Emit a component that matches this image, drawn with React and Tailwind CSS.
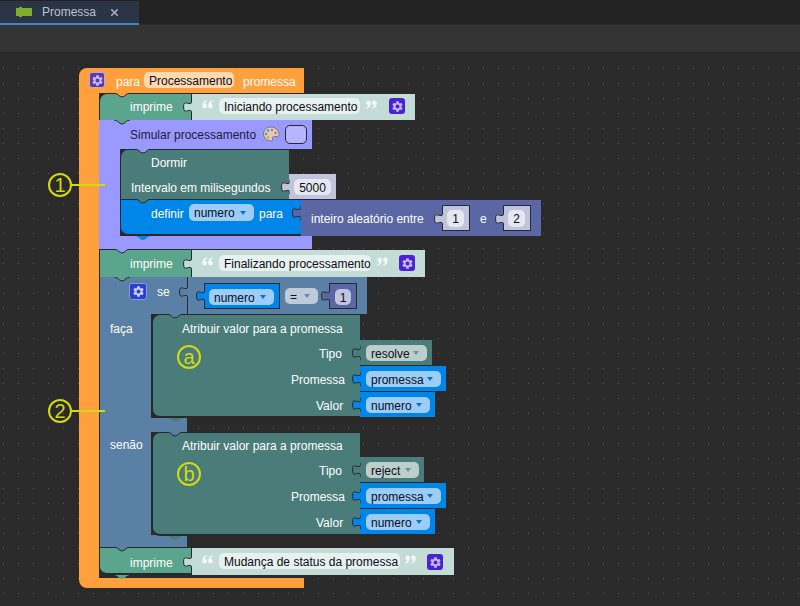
import { MdSettings } from 'react-icons/md';
import { X } from 'lucide-react';

const Box = ({ className = '', children }) => <div className={'absolute ' + className}>{children}</div>;

const Txt = ({ className = '', children }) => (
  <span className={'absolute mt-px whitespace-nowrap leading-4 text-white ' + className}>{children}</span>
);

const Field = ({ className = '', arrow, children }) => (
  <div className={'absolute flex items-center justify-between rounded-[5px] px-[5px] leading-4 text-[#0c0c20] whitespace-nowrap ' + className}>
    <span className="mt-px">{children}</span>
    {arrow && <span className={'mr-[3px] h-0 w-0 border-x-[3px] border-t-[4px] border-x-transparent ' + arrow}></span>}
  </div>
);

// input socket puzzle tab, sits on the left edge of a value block
const Tab = ({ className = '', fill }) => (
  <svg className={'absolute ' + className} width="9" height="16" viewBox="0 0 9 16">
    <path d="M9 0.5 V2 C9 7 3 3 1.5 4 C0 5 0.5 11 1.5 12 C3 13 9 9 9 14 V15.5" fill={fill} stroke="#27292b" strokeWidth="1" />
  </svg>
);

// next connection bump under a statement block
const Bump = ({ className = '', fill, line = true }) => (
  <svg className={'absolute ' + className} width="16" height="5" viewBox="0 0 16 5">
    <path d="M0 0 C4 0 5 4 8 4 C11 4 12 0 16 0 Z" fill={fill} />
    {line && <path d="M0 0 C4 0 5 4 8 4 C11 4 12 0 16 0" fill="none" stroke="#27292b" strokeWidth="1" />}
  </svg>
);

const Gear = ({ className = '', color = 'text-[#c9b6f5]' }) => (
  <div className={'absolute flex items-center justify-center rounded-[3px] ' + className}>
    <MdSettings className={'h-[13px] w-[13px] ' + color} />
  </div>
);

// quote marks of the text block, blockly draws these as images
const Quote = ({ className = '', close }) => (
  <svg className={'absolute ' + className + (close ? ' rotate-180' : '')} width="11" height="9" viewBox="0 0 11 9">
    <path d="M4.6 0.2 C2 1 0.2 3 0.2 6 A2.4 2.4 0 1 0 2.9 3.8 C3 2.8 3.8 2 5 1.5 Z" fill="#f2f8f6" />
    <path d="M10.4 0.2 C7.8 1 6 3 6 6 A2.4 2.4 0 1 0 8.7 3.8 C8.8 2.8 9.6 2 10.8 1.5 Z" fill="#f2f8f6" />
  </svg>
);

const Mark = ({ className = '', children }) => (
  <div className={'absolute flex h-[24px] w-[24px] items-center justify-center rounded-full border-2 border-[#d5d90f] text-[20px] leading-none text-[#d5d90f] ' + className}>
    {children}
  </div>
);

const Palette = () => (
  <svg className="absolute left-[263px] top-[126px]" width="17" height="16" viewBox="0 0 17 16">
    <path d="M8 1 C3 1 0.5 4.5 0.5 8 C0.5 12 4 15 8 15 C9.5 15 10 14 9.5 13 C9 11.5 10 10.5 11.5 10.5 H14 C15.5 10.5 16.5 9.5 16 7.5 C15 3.5 12 1 8 1 Z" fill="#d8cdbd" stroke="#6c6660" strokeWidth="0.8" />
    <circle cx="5" cy="4.5" r="1.2" fill="#4c8fd6" />
    <circle cx="3" cy="8" r="1.2" fill="#4fa84f" />
    <circle cx="5" cy="11.5" r="1.2" fill="#d9a21f" />
    <circle cx="9" cy="4" r="1.1" fill="#d64c4c" />
    <circle cx="12.5" cy="7" r="1.1" fill="#d64c4c" />
  </svg>
);

const ASSIGN = 'bg-[#4a7d7a]';

export default function App() {
  return (
    <div className="relative h-[606px] w-[800px] overflow-hidden bg-[#2a2a2a] [font-family:Liberation_Sans,sans-serif] text-[12px]">
      {/* tab strip */}
      <div className="absolute left-0 top-0 h-[24px] w-[800px] bg-[#232323]"></div>
      <div className="absolute left-0 top-[1px] flex h-[24px] w-[139px] items-center border-b-2 border-[#3f86c4] bg-[#2b3444]">
        <svg className="ml-[16px]" width="16" height="10" viewBox="0 0 16 10">
          <path d="M0 1 H3 V0 H6 V1 H16 V9 H6 V10 H3 V9 H0 Z" fill="#7fae2c" />
        </svg>
        <span className="ml-[10px] text-[#b9c3cf]">Promessa</span>
        <X className="ml-[13px] h-[11px] w-[11px] text-[#a9b0b8]" strokeWidth={3.5} />
      </div>
      <div className="absolute left-0 top-[25px] h-[28px] w-[800px] border-b border-[#262626] bg-[#333333]"></div>

      {/* workspace dots */}
      <div className="absolute left-0 top-[54px] h-[552px] w-[800px] bg-[radial-gradient(circle,#5a5a5a_0.6px,transparent_1px)] bg-[size:15px_15px] bg-[position:-4px_-8px]"></div>

      {/* para Processamento promessa */}
      <Box className="left-[79px] top-[68px] h-[25px] w-[225px] rounded-tl-lg bg-[#ffa03c]" />
      <Box className="left-[79px] top-[93px] h-[485px] w-[20px] bg-[#ffa03c]" />
      <Box className="left-[79px] top-[578px] h-[10px] w-[225px] rounded-bl-lg bg-[#ffa03c]" />
      <Gear className="left-[89px] top-[72px] h-[16px] w-[16px] border border-[#c9a3e0] bg-[#5a3ca8]" />
      <Txt className="left-[116px] top-[73px]">para</Txt>
      <Field className="left-[144px] top-[72px] h-[16px] w-[90px] bg-[#ffd9b0]">Processamento</Field>
      <Txt className="left-[243px] top-[73px]">promessa</Txt>

      {/* imprime 1 */}
      <Box className="left-[99px] top-[93px] h-[27px] w-[92px] rounded-tl-lg border-l border-t border-[#27292b] bg-[#5ba58c]" />
      <Box className="left-[191px] top-[93px] h-[27px] w-[224px] border-t border-[#27292b] bg-[#c3dcd6]" />
      <Box className="left-[191px] top-[93px] h-[27px] w-px bg-[#27292b]" />
      <Bump className="left-[114px] top-[93px]" fill="#ffa03c" />
      <Tab className="left-[183px] top-[99px]" fill="#c3dcd6" />
      <Txt className="left-[130px] top-[98px]">imprime</Txt>
      <Quote className="left-[202px] top-[100px]" />
      <Field className="left-[219px] top-[98px] h-[16px] w-[141px] bg-[#e7f1ee]">Iniciando processamento</Field>
      <Quote className="left-[366px] top-[100px]" close />
      <Gear className="left-[389px] top-[98px] h-[16px] w-[16px] bg-[#4a23d1]" />

      {/* Simular processamento */}
      <Box className="left-[99px] top-[120px] h-[29px] w-[213px] bg-[#9a99ff]" />
      <Box className="left-[99px] top-[149px] h-[88px] w-[21px] bg-[#9a99ff]" />
      <Box className="left-[99px] top-[236px] h-[13px] w-[213px] bg-[#9a99ff]" />
      <Bump className="left-[114px] top-[120px]" fill="#5ba58c" />
      <Txt className="left-[130px] top-[126px] !text-[#1c1c3a]">Simular processamento</Txt>
      <Palette />
      <Box className="left-[285px] top-[125px] h-[19px] w-[22px] rounded-[5px] border border-[#27292b] bg-[#b5b4ff]" />

      {/* Dormir */}
      <Box className={'left-[120px] top-[149px] h-[50px] w-[169px] rounded-tl-lg border-l border-t border-[#27292b] ' + ASSIGN} />
      <Bump className="left-[135px] top-[149px]" fill="#9a99ff" />
      <Txt className="left-[151px] top-[154px]">Dormir</Txt>
      <Txt className="left-[131px] top-[179px]">Intervalo em milisegundos</Txt>
      <Box className="left-[289px] top-[174px] h-[25px] w-[47px] bg-[#c0c4dc]" />
      <Tab className="left-[281px] top-[179px]" fill="#c0c4dc" />
      <Field className="left-[294px] top-[179px] h-[16px] w-[37px] justify-center bg-[#e6e8f1]">5000</Field>

      {/* definir */}
      <Box className="left-[120px] top-[199px] h-[37px] w-[181px] rounded-bl-lg border-b-2 border-l border-t border-[#27292b] bg-[#0086e8]" />
      <Bump className="left-[135px] top-[199px]" fill="#4a7d7a" />
      <Bump className="left-[135px] top-[236px]" fill="#0086e8" line={false} />
      <Txt className="left-[151px] top-[205px]">definir</Txt>
      <Field className="left-[189px] top-[204px] h-[17px] w-[65px] bg-[#9bcdf7]" arrow="border-t-[#0a74cc]">numero</Field>
      <Txt className="left-[259px] top-[205px]">para</Txt>

      {/* inteiro aleatorio */}
      <Box className="left-[301px] top-[200px] h-[36px] w-[240px] bg-[#5b67a5]" />
      <Tab className="left-[292px] top-[205px]" fill="#5b67a5" />
      <Txt className="left-[311px] top-[210px]">inteiro aleatório entre</Txt>
      <Box className="left-[442px] top-[205px] h-[26px] w-[28px] border border-[#27292b] bg-[#c0c4dc]" />
      <Tab className="left-[434px] top-[211px]" fill="#c0c4dc" />
      <Field className="left-[447px] top-[210px] h-[17px] w-[17px] justify-center !px-0 bg-[#e6e8f1]">1</Field>
      <Txt className="left-[480px] top-[210px]">e</Txt>
      <Box className="left-[503px] top-[205px] h-[26px] w-[28px] border border-[#27292b] bg-[#c0c4dc]" />
      <Tab className="left-[495px] top-[211px]" fill="#c0c4dc" />
      <Field className="left-[508px] top-[210px] h-[17px] w-[17px] justify-center !px-0 bg-[#e6e8f1]">2</Field>

      {/* imprime 2 */}
      <Box className="left-[99px] top-[249px] h-[28px] w-[92px] border-l border-t border-[#27292b] bg-[#5ba58c]" />
      <Box className="left-[191px] top-[250px] h-[27px] w-[234px] bg-[#c3dcd6]" />
      <Box className="left-[191px] top-[250px] h-[27px] w-px bg-[#27292b]" />
      <Bump className="left-[114px] top-[249px]" fill="#9a99ff" />
      <Tab className="left-[183px] top-[256px]" fill="#c3dcd6" />
      <Txt className="left-[130px] top-[255px]">imprime</Txt>
      <Quote className="left-[202px] top-[257px]" />
      <Field className="left-[219px] top-[255px] h-[16px] w-[152px] bg-[#e7f1ee]">Finalizando processamento</Field>
      <Quote className="left-[377px] top-[257px]" close />
      <Gear className="left-[399px] top-[255px] h-[16px] w-[16px] bg-[#4a23d1]" />

      {/* se / faca / senao */}
      <Box className="left-[99px] top-[277px] h-[270px] w-[52px] border-l border-[#27292b] bg-[#5b80a5]" />
      <Box className="left-[151px] top-[277px] h-[37px] w-[216px] bg-[#5b80a5]" />
      <Box className="left-[151px] top-[418px] h-[14px] w-[36px] bg-[#5b80a5]" />
      <Box className="left-[151px] top-[535px] h-[12px] w-[36px] bg-[#5b80a5]" />
      <Box className="left-[187px] top-[277px] h-[37px] w-px bg-[#27292b]" />
      <Bump className="left-[114px] top-[277px]" fill="#5ba58c" />
      <Gear className="left-[129px] top-[283px] h-[17px] w-[18px] border border-[#7f9fe0] bg-[#2b3fd0]" color="text-[#c9d3f5]" />
      <Txt className="left-[157px] top-[283px]">se</Txt>
      <Tab className="left-[179px] top-[284px]" fill="#5b80a5" />

      <Box className="left-[204px] top-[283px] h-[26px] w-[76px] border border-[#27292b] bg-[#0086e8]" />
      <Tab className="left-[196px] top-[288px]" fill="#0086e8" />
      <Field className="left-[209px] top-[289px] h-[16px] w-[65px] bg-[#9bcdf7]" arrow="border-t-[#0a74cc]">numero</Field>
      <Field className="left-[285px] top-[288px] h-[16px] w-[33px] bg-[#bdcbdb]" arrow="border-t-[#6f8bab]">=</Field>
      <Box className="left-[329px] top-[283px] h-[26px] w-[28px] border border-[#27292b] bg-[#5b67a5]" />
      <Tab className="left-[321px] top-[288px]" fill="#5b67a5" />
      <Field className="left-[335px] top-[289px] h-[16px] w-[16px] justify-center !px-0 bg-[#c0c4dc]">1</Field>

      <Txt className="left-[110px] top-[320px]">faça</Txt>
      <Txt className="left-[110px] top-[436px]">senão</Txt>

      {/* atribuir a */}
      <Box className={'left-[152px] top-[314px] h-[104px] w-[208px] rounded-l-lg border-b-2 border-l border-t border-[#27292b] ' + ASSIGN} />
      <Bump className="left-[167px] top-[314px]" fill="#5b80a5" />
      <Bump className="left-[167px] top-[418px]" fill="#4a7d7a" line={false} />
      <Txt className="left-[182px] top-[320px]">Atribuir valor para a promessa</Txt>
      <Mark className="left-[177px] top-[345px]">a</Mark>
      <Txt className="left-[319px] top-[345px]">Tipo</Txt>
      <Txt className="left-[291px] top-[371px]">Promessa</Txt>
      <Txt className="left-[316px] top-[397px]">Valor</Txt>

      <Box className={'left-[360px] top-[340px] h-[25px] w-[72px] ' + ASSIGN} />
      <Tab className="left-[352px] top-[345px]" fill="#4a7d7a" />
      <Field className="left-[366px] top-[345px] h-[16px] w-[61px] bg-[#bdcfcd]" arrow="border-t-[#6f9491]">resolve</Field>
      <Box className="left-[360px] top-[366px] h-[25px] w-[86px] bg-[#0086e8]" />
      <Tab className="left-[352px] top-[371px]" fill="#0086e8" />
      <Field className="left-[366px] top-[371px] h-[16px] w-[75px] bg-[#9bcdf7]" arrow="border-t-[#0a74cc]">promessa</Field>
      <Box className="left-[360px] top-[392px] h-[25px] w-[75px] bg-[#0086e8]" />
      <Tab className="left-[352px] top-[397px]" fill="#0086e8" />
      <Field className="left-[366px] top-[397px] h-[16px] w-[64px] bg-[#9bcdf7]" arrow="border-t-[#0a74cc]">numero</Field>

      {/* atribuir b */}
      <Box className={'left-[152px] top-[432px] h-[104px] w-[208px] rounded-l-lg border-b-2 border-l border-t border-[#27292b] ' + ASSIGN} />
      <Bump className="left-[167px] top-[432px]" fill="#5b80a5" />
      <Bump className="left-[167px] top-[536px]" fill="#4a7d7a" line={false} />
      <Txt className="left-[182px] top-[437px]">Atribuir valor para a promessa</Txt>
      <Mark className="left-[177px] top-[462px]">b</Mark>
      <Txt className="left-[319px] top-[462px]">Tipo</Txt>
      <Txt className="left-[291px] top-[488px]">Promessa</Txt>
      <Txt className="left-[316px] top-[514px]">Valor</Txt>

      <Box className={'left-[360px] top-[457px] h-[25px] w-[64px] ' + ASSIGN} />
      <Tab className="left-[352px] top-[462px]" fill="#4a7d7a" />
      <Field className="left-[366px] top-[462px] h-[16px] w-[53px] bg-[#bdcfcd]" arrow="border-t-[#6f9491]">reject</Field>
      <Box className="left-[360px] top-[483px] h-[25px] w-[86px] bg-[#0086e8]" />
      <Tab className="left-[352px] top-[488px]" fill="#0086e8" />
      <Field className="left-[366px] top-[488px] h-[16px] w-[75px] bg-[#9bcdf7]" arrow="border-t-[#0a74cc]">promessa</Field>
      <Box className="left-[360px] top-[509px] h-[25px] w-[75px] bg-[#0086e8]" />
      <Tab className="left-[352px] top-[514px]" fill="#0086e8" />
      <Field className="left-[366px] top-[514px] h-[16px] w-[64px] bg-[#9bcdf7]" arrow="border-t-[#0a74cc]">numero</Field>

      {/* imprime 3 */}
      <Box className="left-[99px] top-[547px] h-[28px] w-[92px] rounded-bl-lg border-b-2 border-l border-t border-[#27292b] bg-[#5ba58c]" />
      <Box className="left-[191px] top-[548px] h-[27px] w-[263px] bg-[#c3dcd6]" />
      <Box className="left-[191px] top-[548px] h-[27px] w-px bg-[#27292b]" />
      <Bump className="left-[114px] top-[547px]" fill="#5b80a5" />
      <Bump className="left-[114px] top-[575px]" fill="#5ba58c" line={false} />
      <Tab className="left-[183px] top-[554px]" fill="#c3dcd6" />
      <Txt className="left-[130px] top-[554px]">imprime</Txt>
      <Quote className="left-[202px] top-[555px]" />
      <Field className="left-[219px] top-[553px] h-[16px] w-[181px] bg-[#e7f1ee]">Mudança de status da promessa</Field>
      <Quote className="left-[405px] top-[555px]" close />
      <Gear className="left-[427px] top-[554px] h-[16px] w-[16px] bg-[#4a23d1]" />

      {/* annotations */}
      <Mark className="left-[48px] top-[173px]">1</Mark>
      <Box className="left-[72px] top-[184px] h-[2px] w-[33px] bg-[#d5d90f]" />
      <Mark className="left-[48px] top-[399px]">2</Mark>
      <Box className="left-[72px] top-[410px] h-[2px] w-[33px] bg-[#d5d90f]" />
    </div>
  );
}
